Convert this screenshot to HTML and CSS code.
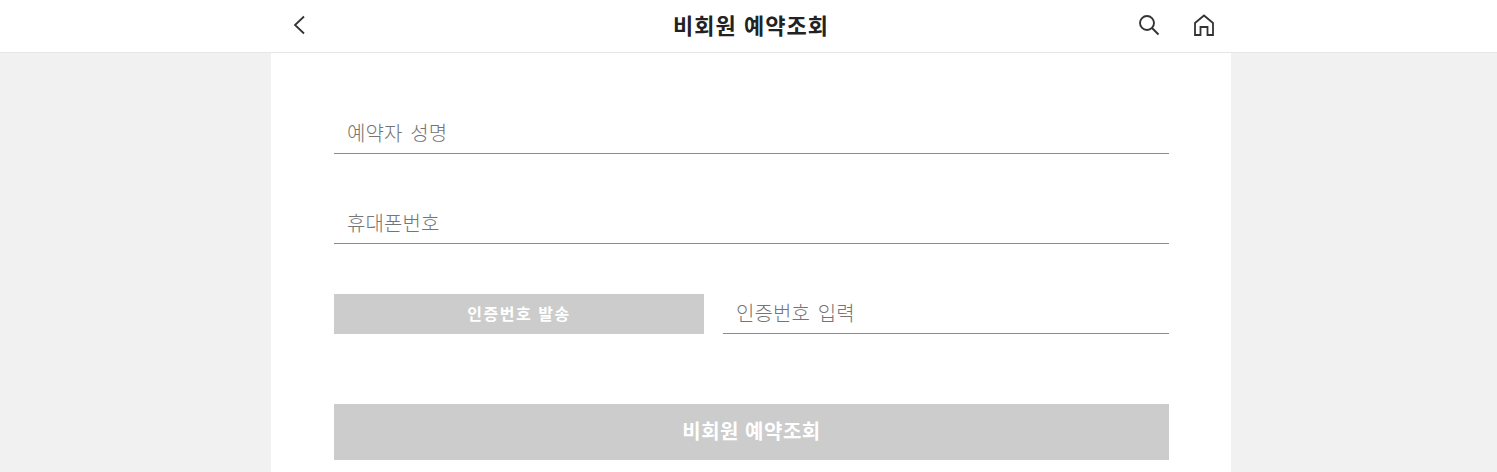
FILE: index.html
```html
<!DOCTYPE html>
<html lang="ko">
<head>
    <meta charset="UTF-8">
    <title>비회원 예약조회</title>
    <link rel="stylesheet" href="styles.css">
</head>
<body>
    <header class="top-bar">
        <div class="top-inner">
            <a class="back-btn" href="#" aria-label="뒤로">
                <svg width="14" height="20" viewBox="0 0 14 20"><path d="M12 1.5 L3 10 L12 18.5" fill="none" stroke="#333" stroke-width="1.8"/></svg>
            </a>
            <h1>비회원 예약조회</h1>
            <div class="top-icons">
                <svg width="24" height="24" viewBox="0 0 24 24"><circle cx="10" cy="10" r="7" fill="none" stroke="#333" stroke-width="1.9"/><path d="M15 15 L21.5 21.5" stroke="#333" stroke-width="2" fill="none"/></svg>
                <svg width="24" height="24" viewBox="0 0 24 24"><path d="M3 22 V10 L12 2.5 L21 10 V22 H15.5 V14 H8.5 V22 Z" fill="none" stroke="#333" stroke-width="1.8"/></svg>
            </div>
        </div>
    </header>
    <main class="content">
        <div class="form-group">
            <input type="text" class="input-field" placeholder="예약자 성명">
        </div>
        <div class="form-group">
            <input type="text" class="input-field" placeholder="휴대폰번호">
        </div>
        <div class="auth-row">
            <button class="send-btn">인증번호 발송</button>
            <input type="text" class="input-field" placeholder="인증번호 입력">
        </div>
        <button class="submit-btn">비회원 예약조회</button>
    </main>
</body>
</html>
```

FILE: styles.css
```css
html, body {
    margin: 0;
    height: 100%;
    overflow: hidden;
}
body {
    background-color: #f1f1f1;
    font-family: "Noto Sans CJK KR", "Liberation Sans", sans-serif;
}
.top-bar {
    background-color: #fff;
    border-bottom: 1px solid #e6e6e6;
    height: 52px;
}
.top-inner {
    width: 960px;
    height: 52px;
    margin: 0 266px 0 271px;
    display: flex;
    align-items: center;
    padding: 0 15px 2px 21px;
    box-sizing: border-box;
}
.back-btn {
    display: flex;
    width: 115px;
    flex: none;
}
h1 {
    flex: 1;
    margin: 0;
    padding-bottom: 3px;
    font-size: 22px;
    font-weight: 700;
    letter-spacing: 1px;
    text-align: center;
    color: #222;
}
.top-icons {
    display: flex;
    justify-content: flex-end;
    gap: 31px;
    width: 121px;
    flex: none;
}
.content {
    width: 960px;
    height: 419px;
    margin: 0 266px 0 271px;
    padding: 61px 62px 0 63px;
    box-sizing: border-box;
    background-color: #fff;
}
.form-group {
    margin-bottom: 50px;
}
.input-field {
    display: block;
    width: 100%;
    height: 40px;
    padding: 0 13px 2px;
    border: none;
    border-bottom: 1px solid #8c8c8c;
    box-sizing: border-box;
    font-family: inherit;
    font-size: 20px;
    font-weight: 300;
    letter-spacing: 0.1px;
    word-spacing: 2px;
    outline: none;
}
.input-field::placeholder {
    color: #757575;
}
.auth-row {
    display: flex;
    gap: 19px;
    margin-bottom: 70px;
}
.auth-row .input-field {
    flex: 1;
}
.send-btn {
    width: 370px;
    height: 40px;
    flex: none;
    padding: 0 0 2px;
    border: none;
    background-color: #ccc;
    color: #fff;
    font-family: inherit;
    font-size: 16px;
    font-weight: 700;
    letter-spacing: 1.5px;
}
.submit-btn {
    display: block;
    width: 100%;
    height: 56px;
    padding: 0 0 3px;
    border: none;
    background-color: #ccc;
    color: #fff;
    font-family: inherit;
    font-size: 20px;
    font-weight: 700;
    letter-spacing: 0.5px;
}
```
